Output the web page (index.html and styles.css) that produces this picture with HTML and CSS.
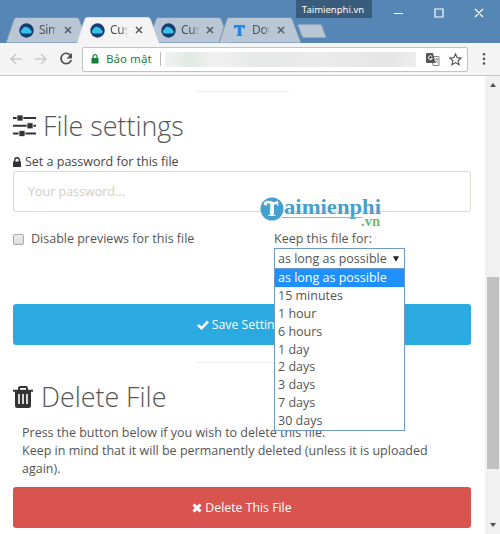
FILE: index.html
```html
<!DOCTYPE html>
<html lang="en">
<head>
<meta charset="utf-8">
<title>File settings</title>
<link rel="stylesheet" href="styles.css">
</head>
<body>
<svg width="0" height="0" class="defs" aria-hidden="true">
  <defs>
    <symbol id="cloud" viewBox="0 0 15 15"><circle cx="7.5" cy="7.5" r="7.2" fill="#173c73"/><path d="M3.4 10.5a2.2 2.2 0 0 1 0-4.2A3.2 3.2 0 0 1 9 4.8a2.2 2.2 0 0 1 2.1 2 2 2 0 0 1 .5 3.7z" fill="#35c3e8"/></symbol>
    <symbol id="close" viewBox="0 0 8 8"><path d="M1 1l6 6M7 1L1 7" stroke="#555b62" stroke-width="1.5"/></symbol>
  </defs>
</svg>
<div class="window">
  <header class="titlebar">
    <div class="tabs">
      <div class="tab"><svg class="shape" viewBox="0 0 82 26" preserveAspectRatio="none"><path d="M0 25.500 8 2Q8.700.5 10 .5H71Q72.500.5 73.200 2L82 25.500"/></svg><svg class="fav"><use href="#cloud"/></svg><span>Sim</span><svg class="x"><use href="#close"/></svg></div>
      <div class="tab active"><svg class="shape" viewBox="0 0 82 26" preserveAspectRatio="none"><path d="M0 26 8 2Q8.700.5 10 .5H71Q72.500.5 73.200 2L82 26"/></svg><svg class="fav"><use href="#cloud"/></svg><span>Cus</span><svg class="x"><use href="#close"/></svg></div>
      <div class="tab"><svg class="shape" viewBox="0 0 82 26" preserveAspectRatio="none"><path d="M0 25.500 8 2Q8.700.5 10 .5H71Q72.500.5 73.200 2L82 25.500"/></svg><svg class="fav"><use href="#cloud"/></svg><span>Cus</span><svg class="x"><use href="#close"/></svg></div>
      <div class="tab"><svg class="shape" viewBox="0 0 82 26" preserveAspectRatio="none"><path d="M0 25.500 8 2Q8.700.5 10 .5H71Q72.500.5 73.200 2L82 25.500"/></svg><svg class="fav" viewBox="0 0 15 15"><path d="M2 2h11v3.500h-1.200L11 4.200H9.200v7.600l1.300.4V13h-6v-.8l1.300-.4V4.200H4L3.200 5.500H2z" fill="#2186e8"/></svg><span>Dow</span><svg class="x"><use href="#close"/></svg></div>
    </div>
    <svg class="newtab" viewBox="0 0 32 15"><path d="M2.500.5H24Q25.500.5 26 2L30 13.500H8Q6.500 13.500 6 12L2 1.500Z"/></svg>
    <div class="caption">Taimienphi.vn</div>
    <svg class="controls" viewBox="0 0 92 12"><path d="M1 6.500h9M42 2h8v8h-8zM82 2l8 8M90 2l-8 8"/></svg>
  </header>
  <nav class="toolbar">
    <svg class="navicons" viewBox="0 0 66 16" fill="none"><g stroke="#c9c9c9" stroke-width="1.500"><path d="M13 8H2M7 3 2 8l5 5M26 8h11M32 3l5 5-5 5"/></g><path d="M61.500 4.500A5.200 5.200 0 1 0 62.200 9" stroke="#505050" stroke-width="1.700"/><path d="M63 2v5.500h-5.500z" fill="#505050"/></svg>
    <div class="address">
      <svg class="securelock" viewBox="0 0 8 10"><path d="M.5 4h7v5.500h-7z" fill="#158043"/><path d="M2 4V2.700a2 2 0 0 1 4 0V4" fill="none" stroke="#158043" stroke-width="1.200"/></svg>
      <span class="secure">Bảo mật</span><i class="sep"></i><i class="smear"></i>
      <svg class="translate" viewBox="0 0 14 13"><path d="M5 3.500h8v9H7z" fill="#fff" stroke="#888"/><path d="M0 1q0-1 1-1h6l2.500 10H1Q0 10 0 9z" fill="#555"/><path d="M6.200 3.700A2 2 0 1 0 6.300 5.500H4.500" fill="none" stroke="#fff"/><path d="M8.800 6h3.400M10.500 5v1M12 6q-1 3-3 4M9.500 7.500l2.500 3" fill="none" stroke="#777" stroke-width=".8"/></svg>
      <svg class="star" viewBox="0 0 13 13"><path d="M6.500 1l1.600 3.700 4 .4-3 2.700.9 3.900-3.500-2.100L3 11.700l.9-3.900-3-2.700 4-.4z" fill="none" stroke="#555" stroke-width="1.200"/></svg>
    </div>
    <svg class="more" viewBox="0 0 4 14"><g fill="#555"><circle cx="2" cy="2.300" r="1.300"/><circle cx="2" cy="6.900" r="1.300"/><circle cx="2" cy="11.500" r="1.300"/></g></svg>
  </nav>
  <div class="viewport">
    <main class="page">
      <hr class="rule first">
      <h2 class="settings"><svg viewBox="0 0 24 22"><path d="M0 3h23M0 10.800h23M0 18.500h23" stroke="#333" stroke-width="2"/><path d="M4 0h6v6H4zM14 7.800h6v6h-6zM6 15.500h6v6H6z" fill="#333" stroke="#fff" stroke-width=".7"/></svg><span>File settings</span></h2>
      <label class="passlabel" for="pw"><svg viewBox="0 0 8 10"><path d="M0 4.500h8V10H0z" fill="#333"/><path d="M1.700 5V3a2.300 2.300 0 0 1 4.600 0v2" fill="none" stroke="#333" stroke-width="1.400"/></svg><span>Set a password for this file</span></label>
      <input id="pw" class="password" type="text" placeholder="Your password...">
      <div class="options">
        <label class="check"><i></i><span>Disable previews for this file</span></label>
        <div class="keep">
          <span class="keeplabel">Keep this file for:</span>
          <div class="select"><span>as long as possible</span><svg viewBox="0 0 6 6"><path d="M0 .3h6L3 5.700z" fill="#222"/></svg>
            <ul class="menu"><li class="chosen">as long as possible</li><li>15 minutes</li><li>1 hour</li><li>6 hours</li><li>1 day</li><li>2 days</li><li>3 days</li><li>7 days</li><li>30 days</li></ul>
          </div>
          <svg class="watermark" viewBox="0 0 124 34"><circle cx="12" cy="12" r="11.500" fill="#469fcd"/><path d="M5 8q0-3 3-3 2 0 4 1t6-1M12.500 6v12" fill="none" stroke="#fff" stroke-width="2.600"/><text x="5" y="19" class="wm-t">T</text><text x="24" y="17" class="wm-name" textLength="97" lengthAdjust="spacingAndGlyphs">aimienphi</text><path d="M22 20.500h80" stroke="#7bbddd"/><text x="101" y="29" class="wm-vn" textLength="19" lengthAdjust="spacingAndGlyphs">.vn</text></svg>
        </div>
      </div>
      <button class="btn save"><svg viewBox="0 0 12 10"><path d="M1 5l3.500 3.300L11 1.500" fill="none" stroke="#fff" stroke-width="2.600"/></svg><span>Save Settings</span></button>
      <hr class="rule second">
      <h2 class="delete"><svg viewBox="0 0 20 22"><path d="M6 4V2.200Q6 1 7.200 1h5.600Q14 1 14 2.200V4M0 4.700h20" fill="none" stroke="#333" stroke-width="2"/><path d="M2 5h16v14.500q0 2.500-2.500 2.500h-11Q2 22 2 19.500z" fill="#333"/><path d="M6 8v10M10 8v10M14 8v10" stroke="#fff" stroke-width="1.600"/></svg><span>Delete File</span></h2>
      <p class="notice"><span>Press the button below if you wish to delete this file.</span><br><span>Keep in mind that it will be permanently deleted (unless it is uploaded</span><br><span>again).</span></p>
      <button class="btn danger"><svg viewBox="0 0 10 10"><path d="M1.500 1.500l7 7M8.500 1.500l-7 7" stroke="#fff" stroke-width="3"/></svg><span>Delete This File</span></button>
    </main>
    <div class="scrollbar"><svg viewBox="0 0 6 4"><path d="M0 4h6L3 0z"/></svg><i></i><svg viewBox="0 0 6 4"><path d="M0 0h6L3 4z"/></svg></div>
  </div>
</div>
</body>
</html>
```
FILE: styles.css
```css
* { box-sizing: border-box; }
body { margin: 0; font: 12.5px/18px "Open Sans", sans-serif; color: #555; background: #fff; }
svg { display: block; flex: none; }
.defs { position: absolute; }
.window { width: 500px; height: 534px; display: flex; flex-direction: column; overflow: hidden; }
.titlebar { height: 43px; flex: none; background: #5686b5; display: flex; align-items: flex-start; position: relative; }
.tabs { display: flex; padding: 17px 0 0 6px; }
.tab { position: relative; z-index: 0; width: 82px; height: 26px; margin-right: -11px; display: flex; align-items: center; padding-left: 13px; font: 12px/18px "Noto Sans", sans-serif; color: #4d535a; }
.tab.active { z-index: 2; }
.shape { position: absolute; inset: 0; width: 82px; height: 26px; z-index: -1; fill: #b9c6d5; stroke: #7690aa; }
.active .shape { fill: #f4f4f4; stroke: #d5dde5; }
.fav { width: 15px; height: 15px; }
.tab span { width: 18px; margin: 0 7px 0 5px; overflow: hidden; letter-spacing: -.3px; -webkit-mask-image: linear-gradient(90deg, #000 65%, transparent); mask-image: linear-gradient(90deg, #000 65%, transparent); }
.x { width: 8px; height: 8px; }
.newtab { width: 32px; height: 15px; margin: 24px 0 0 6px; fill: #b9c6d5; stroke: #8da6bf; }
.caption { position: absolute; left: 296px; top: 0; width: 76px; height: 18px; background: #395b7c; color: #fff; font: 9.5px/20px "Noto Sans", sans-serif; text-align: center; padding-right: 2px; }
.controls { position: absolute; left: 393px; top: 7px; width: 92px; height: 12px; fill: none; stroke: #fff; stroke-width: 1.2; }
.toolbar { height: 33px; flex: none; background: #f4f4f4; border-bottom: 1px solid #c8c8c8; display: flex; align-items: center; padding: 0 13px 0 9px; }
.navicons { width: 66px; height: 16px; }
.address { width: 386px; height: 25px; margin-left: 7px; background: #fff; border: 1px solid #c2c2c2; border-radius: 2px; display: flex; align-items: center; padding-left: 8px; }
.securelock { width: 8px; height: 10px; }
.secure { margin-left: 7px; width: 47px; font: 11.6px/18px "Noto Sans", sans-serif; color: #25824b; white-space: nowrap; }
.sep { width: 1px; height: 14px; background: #bbb; margin: 0 4px 0 7px; }
.smear { width: 251px; height: 15px; background: linear-gradient(90deg, #f1f3f1, #e0e9e3 25px, #f1f1f1 48px, #e6e7e7 100px, #ebebeb 150px, #e5e5e5 225px, #eee); }
.translate { width: 14px; height: 13px; margin-left: 10px; }
.star { width: 13px; height: 13px; margin-left: 9px; }
.more { width: 4px; height: 14px; margin-left: 14px; }
.viewport { flex: 1; display: flex; min-height: 0; }
.page { width: 485px; padding: 15px 14px 0 13px; display: flex; flex-direction: column; overflow: hidden; }
.page > * { flex: none; }
.rule { width: 93px; height: 1px; margin: 0 auto; border: 0; background: #eee; }
.first { margin-right: 182px; }
.second { margin: 17px 182px 0 auto; }
h2 { margin: 0; height: 38px; font-weight: 300; font-size: 26.8px; line-height: 38px; display: flex; align-items: center; white-space: nowrap; }
.settings { margin-top: 15px; }
.settings svg { width: 24px; height: 22px; margin-right: 6px; }
.passlabel { margin-top: 8px; height: 18px; display: flex; align-items: center; color: #444; }
.passlabel svg { width: 8px; height: 10px; margin-right: 4px; }
.password { margin: 0; width: 458px; height: 41px; border: 1px solid #dadacf; border-radius: 3px; padding: 0 14px; font: 12.5px "Open Sans", sans-serif; outline: 0; background: #fff; }
.password::placeholder { color: #cfcfbf; opacity: 1; }
.options { display: flex; height: 92px; padding-top: 18px; }
.check { width: 261px; height: 18px; display: flex; align-items: center; }
.check i { width: 11px; height: 11px; border: 1px solid #aaa; border-radius: 2px; background: linear-gradient(#eee, #ddd); margin-right: 7px; }
.keep { position: relative; width: 131px; }
.keeplabel { display: block; height: 18px; white-space: nowrap; }
.select { position: relative; z-index: 3; height: 21px; background: #fff; border: 1px solid #6d98c8; display: flex; align-items: center; padding: 0 5px 0 3px; justify-content: space-between; white-space: nowrap; }
.select svg { width: 6px; height: 6px; }
.menu { position: absolute; left: -1px; top: 19px; width: 131px; height: 163px; margin: 0; padding: 0; list-style: none; background: #fff; border: 1px solid #6d98c8; }
.menu li { height: 17.9px; line-height: 18px; padding-left: 3px; }
.menu .chosen { background: #1e90ff; color: #fff; }
.watermark { position: absolute; left: -14px; top: -33px; width: 124px; height: 34px; z-index: 2; }
.wm-t { font: bold 20px "Liberation Serif", serif; fill: #fff; }
.wm-name { font: bold 20px "Liberation Serif", serif; fill: #469fcd; }
.wm-vn { font: bold 15px "Liberation Serif", serif; fill: #65bd73; }
.btn { height: 41px; width: 458px; border: 0; border-radius: 3px; padding: 0; color: #fff; font: 500 12.3px/18px "Open Sans", sans-serif; display: flex; align-items: center; justify-content: center; }
.save { background: #2ba9e1; }
.save svg { width: 12px; height: 10px; margin-right: 3px; }
.danger { margin-top: 9px; background: #d9534f; }
.danger svg { width: 10px; height: 10px; margin-right: 3px; }
.delete { margin-top: 15px; }
.delete svg { width: 20px; height: 22px; margin-right: 8px; }
.notice { margin: 8px 0 0; padding-left: 9px; height: 54px; white-space: nowrap; }
.scrollbar { width: 15px; background: #f1f1f1; display: flex; flex-direction: column; align-items: center; padding: 7px 0; }
.scrollbar i { width: 12px; height: 192px; margin: 190px 0 auto; background: #c1c1c1; }
.scrollbar svg { width: 6px; height: 4px; fill: #505050; }
```
